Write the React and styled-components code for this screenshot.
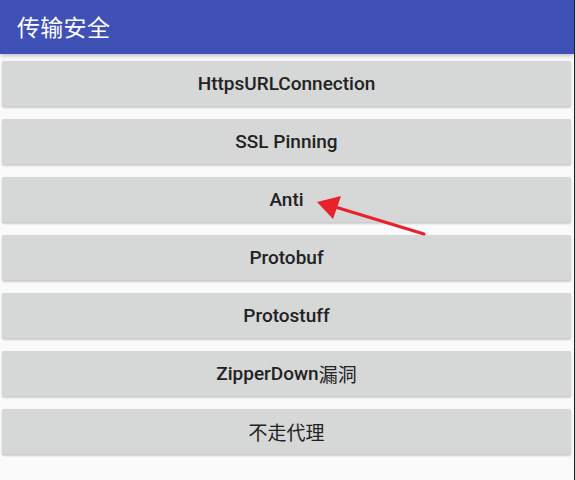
import styled, { createGlobalStyle } from "styled-components";

const GlobalStyle = createGlobalStyle`
  html, body {
    margin: 0;
    padding: 0;
    background: #fafafa;
  }
  body {
    font-family: Roboto, "Noto Sans CJK SC", sans-serif;
  }
`;

const Screen = styled.div`
  position: relative;
  width: 574px;
  height: 480px;
  border-right: 1px solid #1e1e1e;
  background: #fafafa;
  overflow: hidden;
`;

const AppBar = styled.header`
  display: flex;
  align-items: center;
  height: 54px;
  padding: 0 17px 2px;
  box-sizing: border-box;
  background: #3f51b5;
  box-shadow: 0 2px 4px rgba(0, 0, 0, 0.22);
  position: relative;
  z-index: 1;
`;

const Title = styled.h1`
  margin: 0;
  color: #ffffff;
  font-family: "Noto Sans CJK SC", sans-serif;
  font-size: 23px;
  font-weight: 400;
  letter-spacing: 0.3px;
`;

const ButtonList = styled.div`
  display: flex;
  flex-direction: column;
  gap: 13px;
  padding: 7px 3px 0 2px;
`;

const Button = styled.button`
  display: flex;
  justify-content: center;
  align-items: center;
  height: 45px;
  border: none;
  border-radius: 2px;
  background: #d6d7d7;
  box-shadow: 0 2px 2px rgba(0, 0, 0, 0.18), 0 0 1px rgba(0, 0, 0, 0.12);
  color: #222222;
  font-family: Roboto, "Noto Sans CJK SC", sans-serif;
  font-size: 19px;
  font-weight: 500;
  padding: 0;
`;

const Cjk = styled.span`
  font-family: "Noto Sans CJK SC", sans-serif;
  font-weight: 400;
`;

const Arrow = styled.svg`
  position: absolute;
  left: 0;
  top: 0;
  pointer-events: none;
`;

const items = [
  ["HttpsURLConnection"],
  ["SSL Pinning"],
  ["Anti"],
  ["Protobuf"],
  ["Protostuff"],
  ["ZipperDown", "漏洞"],
  ["", "不走代理"],
];

const App = () => {
  return (
    <Screen>
      <GlobalStyle />
      <AppBar>
        <Title>传输安全</Title>
      </AppBar>
      <ButtonList>
        {items.map(([latin, cjk]) => (
          <Button key={latin + (cjk || "")}>
            {latin}
            {cjk && <Cjk>{cjk}</Cjk>}
          </Button>
        ))}
      </ButtonList>
      <Arrow width="575" height="480" viewBox="0 0 575 480">
        <line x1="424" y1="234" x2="332" y2="206" stroke="#e8222a" strokeWidth="3" strokeLinecap="round" />
        <polygon points="317,202 341,196 333,219" fill="#e8222a" />
      </Arrow>
    </Screen>
  );
};

export default App;
